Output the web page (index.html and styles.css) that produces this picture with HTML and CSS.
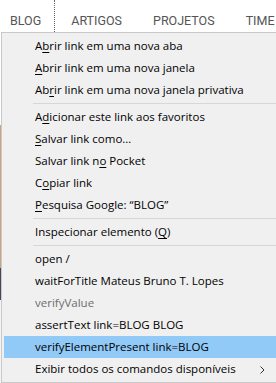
FILE: index.html
```html
<!DOCTYPE html>
<html lang="pt">
<head>
<meta charset="utf-8">
<link rel="stylesheet" href="styles.css">
</head>
<body>
<div class="page">
  <nav class="nav">
    <a class="nav-link nav-first">BLOG</a>
    <a class="nav-link">ARTIGOS</a>
    <a class="nav-link">PROJETOS</a>
    <a class="nav-link">TIME</a>
  </nav>
  <div class="blank"></div>
  <div class="hero"></div>
  <div class="band"></div>
  <div class="rest"></div>
</div>

<div class="menu">
  <div class="item">A<u>b</u>rir link em uma nova aba</div>
  <div class="item"><u>A</u>brir link em uma nova janela</div>
  <div class="item">Ab<u>r</u>ir link em uma nova janela privativa</div>
  <div class="sep"></div>
  <div class="item">A<u>d</u>icionar este link aos favoritos</div>
  <div class="item"><u>S</u>alvar link como…</div>
  <div class="item">Salvar link n<u>o</u> Pocket</div>
  <div class="item">C<u>o</u>piar link</div>
  <div class="item"><u>P</u>esquisa Google: “BLOG”</div>
  <div class="sep"></div>
  <div class="item">Inspecionar elemento (<u>Q</u>)</div>
  <div class="sep"></div>
  <div class="item">open /</div>
  <div class="item">waitForTitle Mateus Bruno T. Lopes</div>
  <div class="item disabled">verifyValue</div>
  <div class="item">assertText link=BLOG BLOG</div>
  <div class="item active">verifyElementPresent link=BLOG</div>
  <div class="item submenu">Exibir todos os comandos disponíveis<svg class="chev" width="5" height="8" viewBox="0 0 5 8"><path d="M0.5 0.5 L4 4 L0.5 7.5" fill="none" stroke="#333" stroke-width="1"/></svg></div>
</div>
</body>
</html>
```
FILE: styles.css
```css
html, body {
  margin: 0;
  padding: 0;
}
body {
  width: 276px;
  height: 383px;
  overflow: hidden;
  background: #fff;
  position: relative;
}
.page {
  display: flex;
  flex-direction: column;
}
.nav {
  height: 32px;
  display: flex;
  align-items: stretch;
  font-family: "Roboto", "Open Sans", sans-serif;
  font-size: 12.5px;
  color: #555;
  padding-left: 10px;
  box-sizing: border-box;
  white-space: nowrap;
}
.nav-link {
  padding-top: 13px;
  margin-right: 31px;
}
.nav-first {
  padding-right: 13px;
  margin-right: 16px;
  border-right: 1px dotted #666;
}
.blank { height: 93px; }
.hero { height: 143px; background: #c9a47e; }
.band { height: 32px; background: #4d4356; }
.rest { height: 83px; background: #f4f4f4; }

.menu {
  position: absolute;
  left: 1px;
  top: 32px;
  width: 300px;
  background: #f0f0f0;
  border: 1px solid #c9c9c9;
  padding: 2px;
  font-family: "Open Sans", "Noto Sans", sans-serif;
  font-size: 11.5px;
  color: #000;
}
.item {
  height: 22px;
  line-height: 22px;
  padding-left: 31px;
  white-space: nowrap;
}
.item u {
  text-decoration-thickness: 1px;
  text-underline-offset: 2px;
}
.disabled { color: #6d6d6d; }
.active { background: #91c9f7; }
.submenu { position: relative; }
.chev {
  position: absolute;
  left: 256px;
  top: 8px;
}
.sep {
  height: 1px;
  background: #d7d7d7;
  margin: 2px 6px 2px 29px;
}
```
